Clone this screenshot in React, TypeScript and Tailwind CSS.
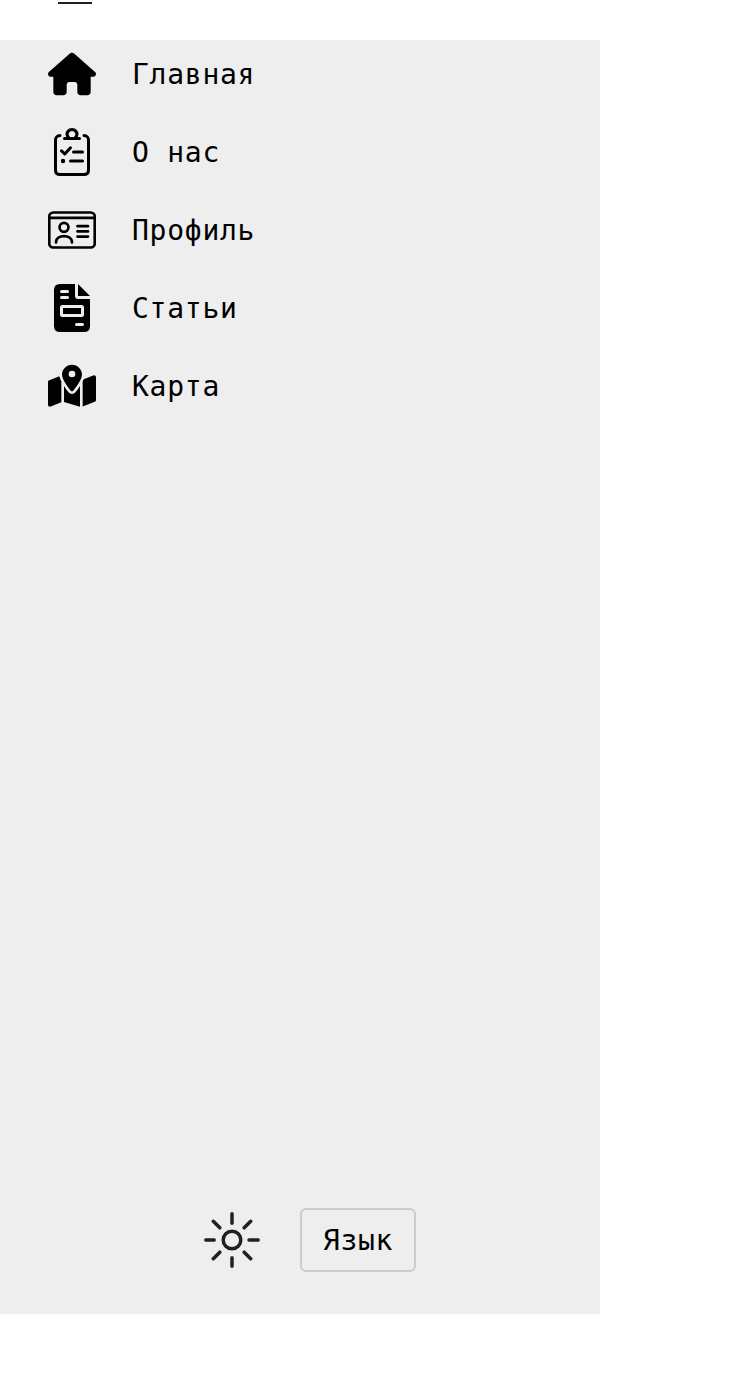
import type { ReactNode } from "react";
import { FaHouse, FaMapLocationDot } from "react-icons/fa6";

const ClipboardIcon = () => (
  <svg viewBox="0 0 48 48" className="size-12" fill="none" stroke="#000" strokeWidth="3" strokeLinecap="round" strokeLinejoin="round">
    <path d="M12 7.500C9.500 7.500 7.500 9.300 7.500 12V42Q7.500 46.500 12 46.500H36Q40.500 46.500 40.500 42V12C40.500 9.300 38.500 7.500 36 7.500" />
    <path d="M16.500 10.500H31.500M20.800 10C16.500 5 21 1.500 24 1.500S31.500 5 27.200 10" />
    <path d="M13.500 22.800L16.800 26L22.500 19.800M25.500 24H34.500M22.500 33H34.500" />
    <circle cx="15" cy="33" r="2.200" fill="#000" stroke="none" />
  </svg>
);

const ProfileIcon = () => (
  <svg viewBox="0 0 48 48" className="size-12" fill="none" stroke="#000" strokeWidth="2.700" strokeLinecap="round">
    <rect x="1.250" y="6.500" width="45.500" height="35" rx="4" />
    <path d="M1.500 11.800H46.500M29.500 20.200H40M29.500 25.400H40M29.500 30.600H40M8 36.500C8 28 24 28 24 36.500" />
    <circle cx="16" cy="21.300" r="4.500" />
  </svg>
);

const ArticleIcon = () => (
  <svg viewBox="0 0 48 48" className="size-12">
    <path d="M12 0H27V12Q27 15 30 15H42V42Q42 48 36 48H12Q6 48 6 42V6Q6 0 12 0Z" />
    <path d="M30 0L42 12H30Z" />
    <g fill="none" stroke="#eee" strokeWidth="3" strokeLinecap="round" strokeLinejoin="round">
      <path d="M13.500 7.500H19.500M13.500 13.500H19.500M28.500 40.500H34.500" />
      <rect x="13.500" y="22.500" width="21" height="9" rx="1" />
    </g>
  </svg>
);

const items: { label: string; icon: ReactNode }[] = [
  { label: "Главная", icon: <FaHouse className="size-12" /> },
  { label: "О нас", icon: <ClipboardIcon /> },
  { label: "Профиль", icon: <ProfileIcon /> },
  { label: "Статьи", icon: <ArticleIcon /> },
  { label: "Карта", icon: <FaMapLocationDot className="size-12" /> },
];

const SunIcon = () => (
  <svg viewBox="0 0 56 56" className="size-14" fill="none" stroke="#212121" strokeWidth="3.500" strokeLinecap="round">
    <circle cx="28" cy="28" r="8.800" />
    <path d="M28 1.800V11.200M28 45.800V54.200M1.800 28H10.200M45 28H54.200M9.300 9.300L15.800 15.800M40.200 40.200L46.700 46.700M9.300 46.700L15.800 40.200M40.200 15.800L46.700 9.300" />
  </svg>
);

export default function App() {
  return (
    <div className="flex h-[1374px] w-[750px] flex-col bg-white font-['DejaVu_Sans_Mono',monospace] text-[28px] leading-[36px] tracking-[0.74px] text-black">
      <header className="h-10 shrink-0 pl-[58px] pt-[2px]">
        <div className="h-[2px] w-[34px] bg-[#212121]" />
      </header>
      <aside className="flex h-[1274px] w-[600px] flex-col justify-between bg-[#eee] pb-[42px] pt-[10px]">
        <nav className="flex flex-col gap-[30px] pl-12">
          {items.map(({ label, icon }) => (
            <a key={label} className="flex h-12 items-center gap-9">
              {icon}
              <span className="pt-[2px]">{label}</span>
            </a>
          ))}
        </nav>
        <div className="flex items-center gap-10 pl-[204px]">
          <SunIcon />
          <button className="flex h-16 w-[116px] items-center justify-center rounded-md border-2 border-[#ccc] pt-[2px]">Язык</button>
        </div>
      </aside>
    </div>
  );
}
